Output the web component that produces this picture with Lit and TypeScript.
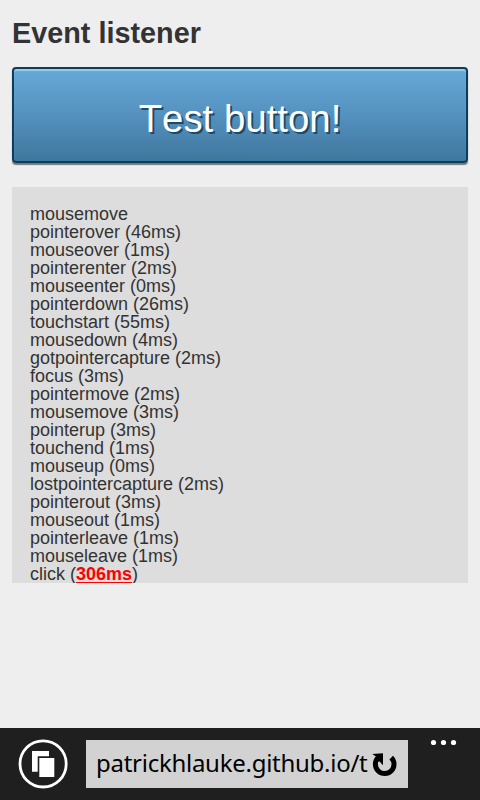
import { LitElement, html, css, svg } from "lit";
import { customElement } from "lit/decorators.js";

const EVENTS: Array<[string, number?]> = [
  ["mousemove"], ["pointerover", 46], ["mouseover", 1], ["pointerenter", 2],
  ["mouseenter", 0], ["pointerdown", 26], ["touchstart", 55], ["mousedown", 4],
  ["gotpointercapture", 2], ["focus", 3], ["pointermove", 2], ["mousemove", 3],
  ["pointerup", 3], ["touchend", 1], ["mouseup", 0], ["lostpointercapture", 2],
  ["pointerout", 3], ["mouseout", 1], ["pointerleave", 1], ["mouseleave", 1],
  ["click", 306],
];

@customElement("app-root")
export class AppRoot extends LitElement {
  static styles = css`
    :host {
      display: flex;
      flex-direction: column;
      height: 800px;
      box-sizing: border-box;
      overflow: hidden;
      background: #eee;
      color: #333;
      font-family: "Liberation Sans", Arial, sans-serif;
    }
    .page { flex: 1; padding: 16px 12px 0; min-height: 0; }
    .title { margin: 0; font-size: 28.8px; line-height: 34px; font-weight: bold; }
    .test {
      display: block;
      box-sizing: border-box;
      width: 100%;
      height: 96px;
      margin: 17px 0 0;
      padding: 8px 0 0;
      border: 2px solid #0d3d5c;
      border-radius: 4px;
      background: linear-gradient(#65a9d7, #5591bf 50%, #3e779d);
      box-shadow: inset 0 2px 1px rgba(255, 255, 255, 0.38), 0 2px 1px rgba(0, 0, 0, 0.5);
      color: #fff;
      font: 38.4px/84px "Liberation Sans", Arial, sans-serif;
      font-kerning: none;
      text-shadow: 2px 2px 0 #1d4a66;
    }
    .log {
      box-sizing: border-box;
      height: 396px;
      margin-top: 24px;
      padding: 18px 18px 0;
      background: #ddd;
      font-size: 18px;
      line-height: 18px;
      font-kerning: none;
      overflow: hidden;
    }
    .slow { color: #f00; font-weight: bold; text-decoration: underline; text-decoration-thickness: 1px; text-underline-offset: 2px; text-decoration-skip-ink: none; }
    .bar { display: flex; height: 72px; background: #1f1f1f; }
    .tabs { width: 50px; height: 50px; margin: 11px 0 0 18px; }
    .address {
      display: flex;
      box-sizing: border-box;
      width: 322px;
      height: 48px;
      margin: 12px 0 0 18px;
      background: #d2d2d2;
      color: #000;
      font: 24px/45px "Noto Sans", "Open Sans", sans-serif;
    }
    .url { width: 282px; padding-left: 10px; box-sizing: border-box; white-space: nowrap; letter-spacing: -0.27px; }
    .reload { width: 30px; height: 48px; margin-left: 1px; }
    .more { width: 30px; height: 10px; margin: 10px 0 0 20px; }
  `;

  render() {
    return html`
      <main class="page">
        <h1 class="title">Event listener</h1>
        <button class="test">Test button!</button>
        <div class="log">
          ${EVENTS.map(([name, ms]) => html`<div>${name}${ms === undefined ? "" : ms > 300
            ? html` (<span class="slow">${ms}ms</span>)` : ` (${ms}ms)`}</div>`)}
        </div>
      </main>
      <footer class="bar">
        <svg class="tabs" viewBox="0 0 50 50">
          <circle cx="25.1" cy="24.9" r="23.1" fill="none" stroke="#fff" stroke-width="2.8" />
          <path d="M14 12h17v5.2H19.7V32.7H14z" fill="#fff" />
          <path d="M21.3 19H36.3V38H21.3z" fill="#fff" />
        </svg>
        <div class="address">
          <span class="url">patrickhlauke.github.io/t</span>
          <svg class="reload" viewBox="0 0 30 48">
            <path d="M9 17.8A9.3 9.3 0 1 0 22.2 17.6" fill="none" stroke="#000" stroke-width="5" />
            <path d="M3.3 14L14 13.3V25.2L10.6 21.6L5 21.5L7.6 17z" fill="#000" />
          </svg>
        </div>
        <svg class="more" viewBox="0 0 30 10">
          ${[5.5, 15.5, 25.5].map((x) => svg`<circle cx=${x} cy="4.5" r="2.6" fill="#fff" />`)}
        </svg>
      </footer>
    `;
  }
}
